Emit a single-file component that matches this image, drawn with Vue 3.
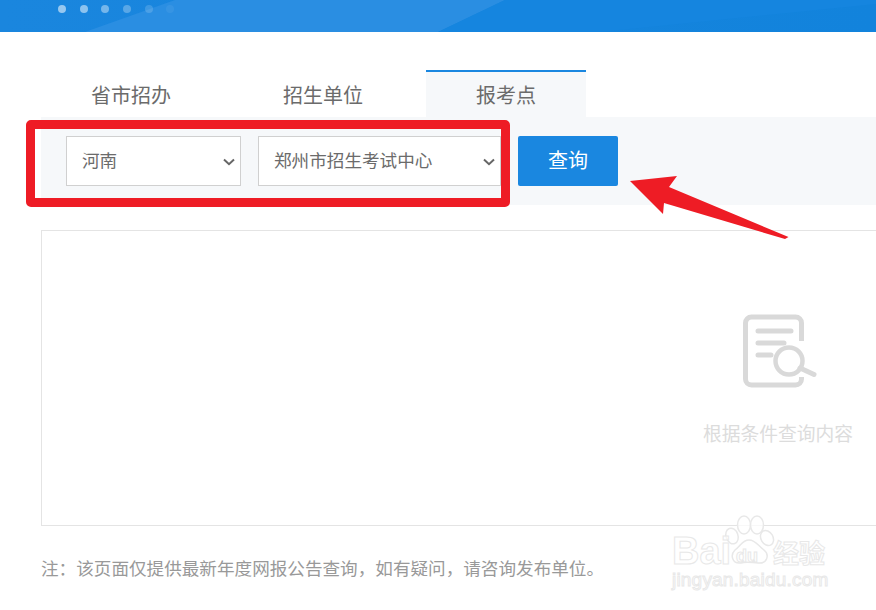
<script setup>
const tabs = [
  { label: '省市招办', cls: 'tab-a' },
  { label: '招生单位', cls: 'tab-b' },
  { label: '报考点', cls: 'tab-c active' },
]
const dots = [0.55, 0.5, 0.4, 0.28, 0.16, 0.06]
const note = '注\uFF1A该页面仅提供最新年度网报公告查询\uFF0C如有疑问\uFF0C请咨询发布单位\u3002'
</script>

<template>
  <div class="page">
    <header class="banner">
      <svg class="swoosh" width="876" height="32" viewBox="0 0 876 32">
        <polygon points="85,32 175,0 505,0 438,32" fill="#2a8ee2" />
        <polygon points="438,32 505,0 876,0 876,4 600,32" fill="#1585df" />
      </svg>
      <div class="dots">
        <span v-for="(o, i) in dots" :key="i" class="dot" :style="{ opacity: o }"></span>
      </div>
    </header>

    <nav class="tabs">
      <div v-for="t in tabs" :key="t.label" class="tab" :class="t.cls">{{ t.label }}</div>
    </nav>

    <section class="panel">
      <div class="select-wrap first">
        <select class="select"><option>河南</option></select>
        <svg class="chev" width="12" height="8" viewBox="0 0 12 8"><path d="M1 1.5 6 6.2 11 1.5" fill="none" stroke="#666" stroke-width="2" /></svg>
      </div>
      <div class="select-wrap second">
        <select class="select"><option>郑州市招生考试中心</option></select>
        <svg class="chev" width="12" height="8" viewBox="0 0 12 8"><path d="M1 1.5 6 6.2 11 1.5" fill="none" stroke="#666" stroke-width="2" /></svg>
      </div>
      <button class="query" type="button">查询</button>
    </section>

    <section class="result">
      <div class="empty">
        <svg width="76" height="76" viewBox="0 0 76 76" class="empty-icon">
          <path d="M58.5 27V9a6 6 0 0 0-6-6H8.500a6 6 0 0 0-6 6v56a6 6 0 0 0 6 6h44a6 6 0 0 0 6-6v-2" fill="none" stroke="#d9d9d9" stroke-width="5" />
          <path d="M15 17H48M15 29H41M15 41H28" fill="none" stroke="#d9d9d9" stroke-width="5" stroke-linecap="round" />
          <circle cx="46" cy="47" r="13.500" fill="#fff" stroke="#d9d9d9" stroke-width="4.500" />
          <path d="M57 54 71 60.500" fill="none" stroke="#d9d9d9" stroke-width="5" stroke-linecap="round" />
        </svg>
        <p class="empty-text">根据条件查询内容</p>
      </div>
    </section>

    <p class="note">{{ note }}</p>

    <div class="mark-box"></div>
    <svg class="arrow" width="876" height="610" viewBox="0 0 876 610">
      <polygon points="630,181 677,176 669,187 788.500,237 785,239 664,203 663,214" fill="#ee1c25" />
    </svg>

    <div class="watermark">
      <svg class="paw" width="70" height="64" viewBox="0 0 70 64">
        <g fill="#fff" fill-opacity="0.75" stroke="#e8e8e8" stroke-width="1.500">
          <ellipse cx="21" cy="10" rx="6.500" ry="9" />
          <ellipse cx="34" cy="10" rx="6.500" ry="9" />
          <ellipse cx="9" cy="21" rx="6" ry="8" transform="rotate(-20 9 21)" />
          <ellipse cx="44" cy="23" rx="6" ry="8" transform="rotate(-30 44 23)" />
          <path d="M26 25c7 0 9 6 15 10 6 5 3 14-6 13-5 0-11-2-17 0-9 1-11-8-6-13 6-4 7-10 14-10z" />
        </g>
      </svg>
      <span class="wm-bai">Bai</span>
      <span class="wm-du">du</span>
      <span class="wm-cn">经验</span>
      <span class="wm-url">jingyan.baidu.com</span>
    </div>
  </div>
</template>

<style scoped>
.page {
  position: relative;
  width: 876px;
  height: 610px;
  overflow: hidden;
  background: #fff;
  font-family: "Noto Sans CJK SC", "Noto Sans", sans-serif;
}
.banner {
  position: relative;
  height: 32px;
  background: linear-gradient(90deg, #1a86de 0%, #1283dc 100%);
}
.swoosh {
  position: absolute;
  left: 0;
  top: 0;
}
.dots {
  position: relative;
  display: flex;
  gap: 13.700px;
  padding: 5px 0 0 58px;
}
.dot {
  width: 8px;
  height: 8px;
  border-radius: 50%;
  background: #fff;
}
.tabs {
  display: flex;
  margin: 38px 0 0 51px;
}
.tab {
  width: 160px;
  height: 47px;
  box-sizing: border-box;
  border-top: 2px solid transparent;
  text-align: center;
  font-size: 20px;
  line-height: 46px;
  color: #6b6b6b;
}
.tab-b { margin-left: 32px; }
.tab-c { margin-left: 23px; }
.tab.active {
  border-top-color: #1a87e0;
  background: #f6f8fa;
}
.panel {
  display: flex;
  gap: 17px;
  width: 1474px;
  height: 88px;
  box-sizing: border-box;
  margin-left: 41px;
  padding: 19px 25px;
  background: #f6f8fa;
}
.select-wrap {
  position: relative;
  height: 50px;
}
.first { width: 175px; }
.second { width: 243px; }
.select {
  width: 100%;
  height: 100%;
  box-sizing: border-box;
  padding: 0 30px 4px 15px;
  border: 1px solid #d0d0d0;
  border-radius: 0;
  background: #fff;
  appearance: none;
  font-family: inherit;
  font-size: 17.600px;
  color: #6b6b6b;
  outline: none;
}
.chev {
  position: absolute;
  right: 6px;
  top: 22px;
  pointer-events: none;
}
.query {
  width: 100px;
  height: 50px;
  padding: 0 0 3px;
  border: 0;
  border-radius: 2px;
  background: #1a87e0;
  color: #fff;
  font-family: inherit;
  font-size: 20px;
}
.result {
  display: flex;
  flex-direction: column;
  align-items: center;
  width: 1474px;
  height: 296px;
  box-sizing: border-box;
  margin: 25px 0 0 41px;
  border: 1px solid #e4e4e4;
}
.empty {
  display: flex;
  flex-direction: column;
  align-items: center;
  padding-top: 83px;
}
.empty-icon {
  margin-left: 5px;
}
.empty-text {
  margin: 29px 0 0;
  font-size: 18.750px;
  line-height: 28px;
  color: #dcdcdc;
}
.note {
  margin: 29px 0 0 41px;
  font-size: 17.600px;
  line-height: 26px;
  color: #999;
  white-space: nowrap;
}
.mark-box {
  position: absolute;
  left: 26px;
  top: 120px;
  width: 484px;
  height: 87px;
  box-sizing: border-box;
  border: 9px solid #ee1c25;
  border-radius: 5px;
}
.arrow {
  position: absolute;
  left: 0;
  top: 0;
}
.watermark {
  position: absolute;
  left: 0;
  top: 0;
  width: 876px;
  height: 610px;
  font-family: "Liberation Sans", sans-serif;
}
.paw {
  position: absolute;
  left: 723px;
  top: 515px;
}
.watermark span {
  position: absolute;
  color: rgba(255, 255, 255, 0.6);
  -webkit-text-stroke: 1px #e8e8e8;
  white-space: nowrap;
}
.wm-bai {
  left: 672px;
  top: 531px;
  font-size: 38px;
  line-height: 40px;
  font-weight: 700;
}
.wm-du {
  left: 736px;
  top: 546px;
  font-size: 18px;
  line-height: 20px;
  font-weight: 700;
}
.wm-cn {
  left: 773px;
  top: 534px;
  font-family: "Noto Sans CJK SC", sans-serif;
  font-size: 26px;
  line-height: 36px;
  font-weight: 700;
}
.wm-url {
  left: 672px;
  top: 568px;
  font-size: 19px;
  line-height: 24px;
  letter-spacing: 0.200px;
}
</style>

<style>
html, body { margin: 0; background: #fff; }
</style>
